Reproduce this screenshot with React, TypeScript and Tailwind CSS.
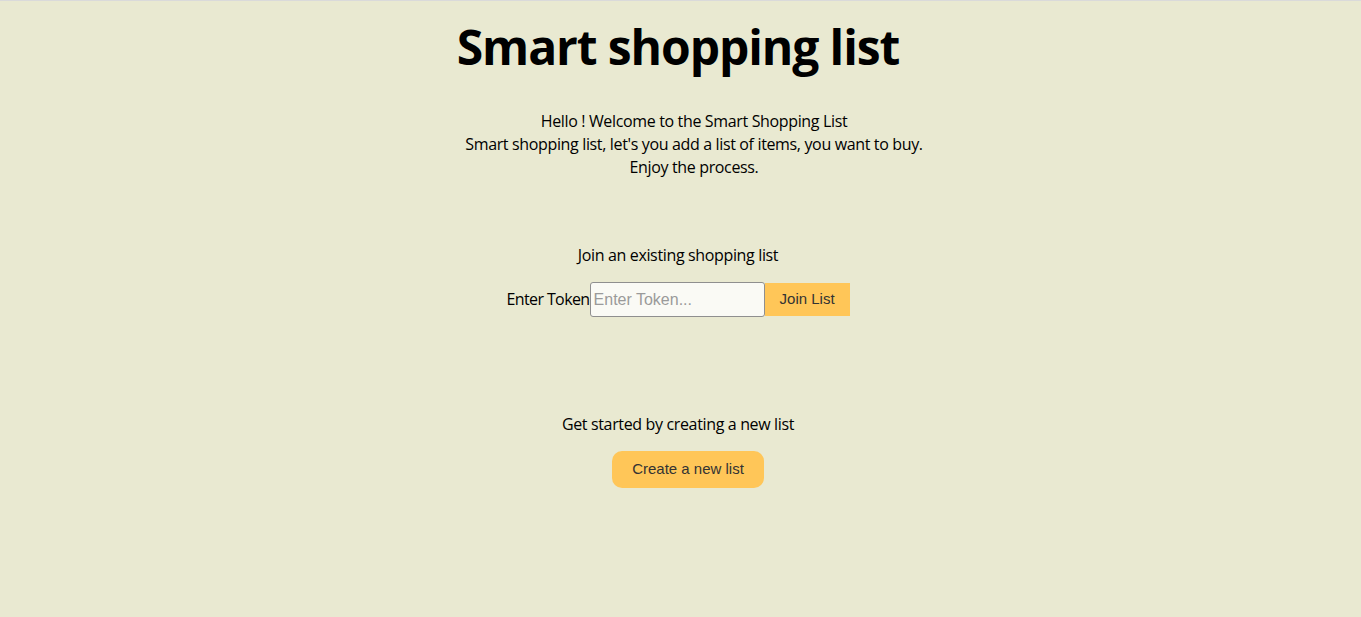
import React, { useState } from 'react';

const App: React.FC = () => {
  const [token, setToken] = useState('');

  return (
    <div className="min-h-screen bg-[#e9e9d1] border-t border-[#dadada] pr-[5px] text-center text-black font-['Open_Sans','Noto_Sans',sans-serif] tracking-[-0.35px]">
      <h1 className="pt-[13px] text-[48px] font-bold leading-[66px] tracking-[-1.1px]">Smart shopping list</h1>

      <div className="mt-[30px] pl-[32px] text-[16px] leading-[23px]">
        <p>Hello ! Welcome to the Smart Shopping List</p>
        <p>Smart shopping list, let's you add a list of items, you want to buy.</p>
        <p>Enjoy the process.</p>
      </div>

      <section className="mt-[65px]">
        <p className="text-[16px] leading-[23px]">Join an existing shopping list</p>
        <div className="mt-[15px] flex items-center justify-center">
          <label htmlFor="token" className="text-[16px] leading-[23px] tracking-[-0.6px]">Enter Token</label>
          <input
            id="token"
            type="text"
            value={token}
            onChange={(e) => setToken(e.target.value)}
            placeholder="Enter Token..."
            className="w-[175px] h-[35px] px-[3px] bg-[#fafaf5] border border-[#8f8f8f] rounded-[3px] font-['Liberation_Sans',Arial,sans-serif] tracking-normal text-[16px] placeholder:text-[#9a9a9a] outline-none"
          />
          <button className="w-[85px] h-[33px] bg-[#ffc658] text-[#333] text-[15px] tracking-normal font-['Liberation_Sans',Arial,sans-serif]">
            Join List
          </button>
        </div>
      </section>

      <section className="mt-[96px]">
        <p className="text-[16px] leading-[23px]">Get started by creating a new list</p>
        <button className="mt-[15px] ml-[20px] w-[152px] h-[37px] rounded-[10px] bg-[#ffc658] text-[#333] text-[15px] tracking-normal font-['Liberation_Sans',Arial,sans-serif]">
          Create a new list
        </button>
      </section>
    </div>
  );
};

export default App;
